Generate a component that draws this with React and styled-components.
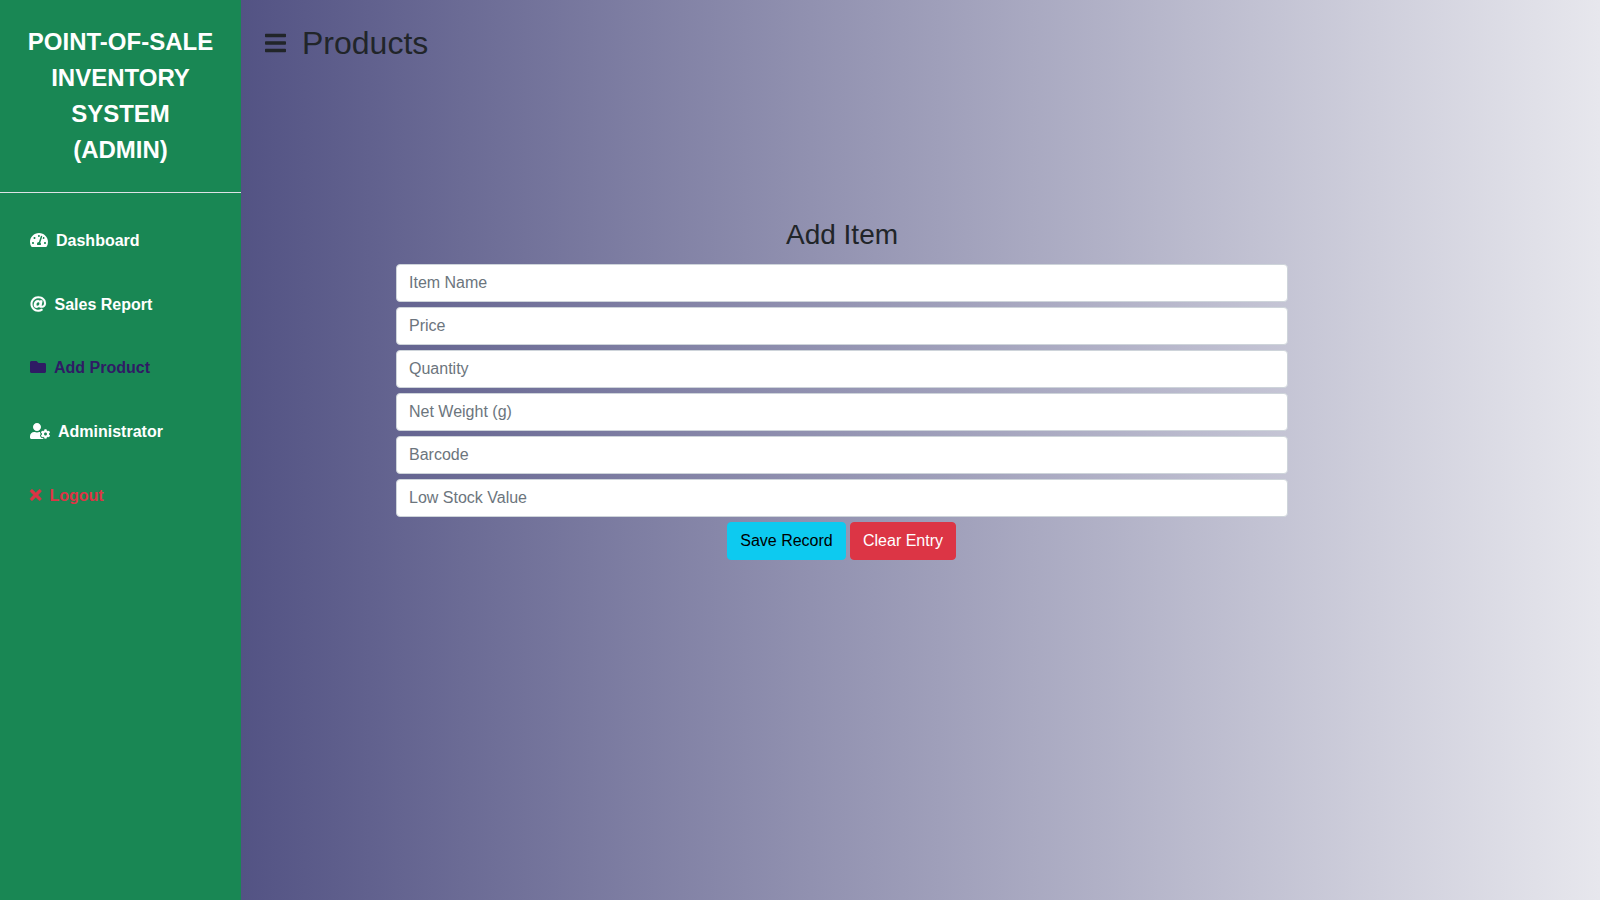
import React from "react";
import styled, { createGlobalStyle } from "styled-components";
import { FaTachometerAlt, FaAt, FaFolder, FaUserCog, FaTimes, FaBars } from "react-icons/fa";

const GlobalStyle = createGlobalStyle`
  *, *::before, *::after { box-sizing: border-box; }
  body {
    margin: 0;
    font-family: "Liberation Sans", Arial, sans-serif;
    font-size: 16px;
    line-height: 1.5;
    color: #212529;
  }
`;

const Page = styled.div`
  display: flex;
  height: 100vh;
  overflow: hidden;
`;

const Sidebar = styled.aside`
  flex: 0 0 241px;
  background: #198754;
`;

const Brand = styled.div`
  padding: 24px;
  border-bottom: 1px solid #dee2e6;
  color: #fff;
  font-size: 24px;
  font-weight: 700;
  line-height: 36px;
  text-align: center;
  text-transform: uppercase;
`;

const Nav = styled.nav`
  display: flex;
  flex-direction: column;
  margin: 16px 0;
`;

const NavLink = styled.a`
  display: flex;
  align-items: center;
  gap: 8px;
  height: 63.8px;
  padding: 0 30px;
  color: ${(p) => p.$color || "#fff"};
  font-weight: 700;
  text-decoration: none;

  svg {
    flex: none;
    width: ${(p) => p.$iconWidth}px;
    height: 16px;
    margin-bottom: 2px;
    overflow: visible;
    stroke-width: ${(p) => p.$stroke || 0};
  }
`;

const Main = styled.main`
  flex: 1;
  background: linear-gradient(to right, #535384, #e7e7ed);
`;

const TopBar = styled.header`
  display: flex;
  align-items: center;
  gap: 16px;
  padding: 24px;

  svg {
    width: 21px;
    height: 24px;
  }
`;

const PageTitle = styled.h2`
  margin: 0;
  font-size: 32px;
  font-weight: 400;
  line-height: 38.4px;
`;

const ItemForm = styled.form`
  display: flex;
  flex-direction: column;
  gap: 5px;
  width: 892px;
  margin: 132px 0 0 155px;
`;

const FormTitle = styled.h3`
  margin: 0 0 7px;
  font-size: 28px;
  font-weight: 400;
  line-height: 33.6px;
  text-align: center;
`;

const Field = styled.input`
  width: 100%;
  height: 38px;
  padding: 6px 12px;
  border: 1px solid #ced4da;
  border-radius: 4px;
  background: #fff;
  color: #212529;
  font: inherit;

  &::placeholder {
    color: #6c757d;
    opacity: 1;
  }
`;

const Actions = styled.div`
  display: flex;
  justify-content: center;
  gap: 4px;
  padding-right: 1px;
`;

const Button = styled.button`
  height: 38px;
  min-width: ${(p) => p.$minWidth || 0}px;
  padding: 6px 12px;
  border: 1px solid ${(p) => p.$bg};
  border-radius: 4px;
  background: ${(p) => p.$bg};
  color: ${(p) => p.$fg};
  font: inherit;
`;

const links = [
  { label: "Dashboard", Icon: FaTachometerAlt, width: 18 },
  { label: "Sales Report", Icon: FaAt, width: 16.5, stroke: 4 },
  { label: "Add Product", Icon: FaFolder, width: 16, color: "#2f1b64" },
  { label: "Administrator", Icon: FaUserCog, width: 20 },
  { label: "Logout", Icon: FaTimes, width: 11.5, stroke: 20, color: "#dc3545" },
];

const fields = ["Item Name", "Price", "Quantity", "Net Weight (g)", "Barcode", "Low Stock Value"];

export default function App() {
  return (
    <Page>
      <GlobalStyle />
      <Sidebar>
        <Brand>Point-of-Sale Inventory System (Admin)</Brand>
        <Nav>
          {links.map(({ label, Icon, width, stroke, color }) => (
            <NavLink key={label} $color={color} $iconWidth={width} $stroke={stroke}>
              <Icon />
              {label}
            </NavLink>
          ))}
        </Nav>
      </Sidebar>
      <Main>
        <TopBar>
          <FaBars />
          <PageTitle>Products</PageTitle>
        </TopBar>
        <ItemForm>
          <FormTitle>Add Item</FormTitle>
          {fields.map((name) => (
            <Field key={name} placeholder={name} />
          ))}
          <Actions>
            <Button type="button" $bg="#0dcaf0" $fg="#000" $minWidth={119}>Save Record</Button>
            <Button type="button" $bg="#dc3545" $fg="#fff">Clear Entry</Button>
          </Actions>
        </ItemForm>
      </Main>
    </Page>
  );
}
